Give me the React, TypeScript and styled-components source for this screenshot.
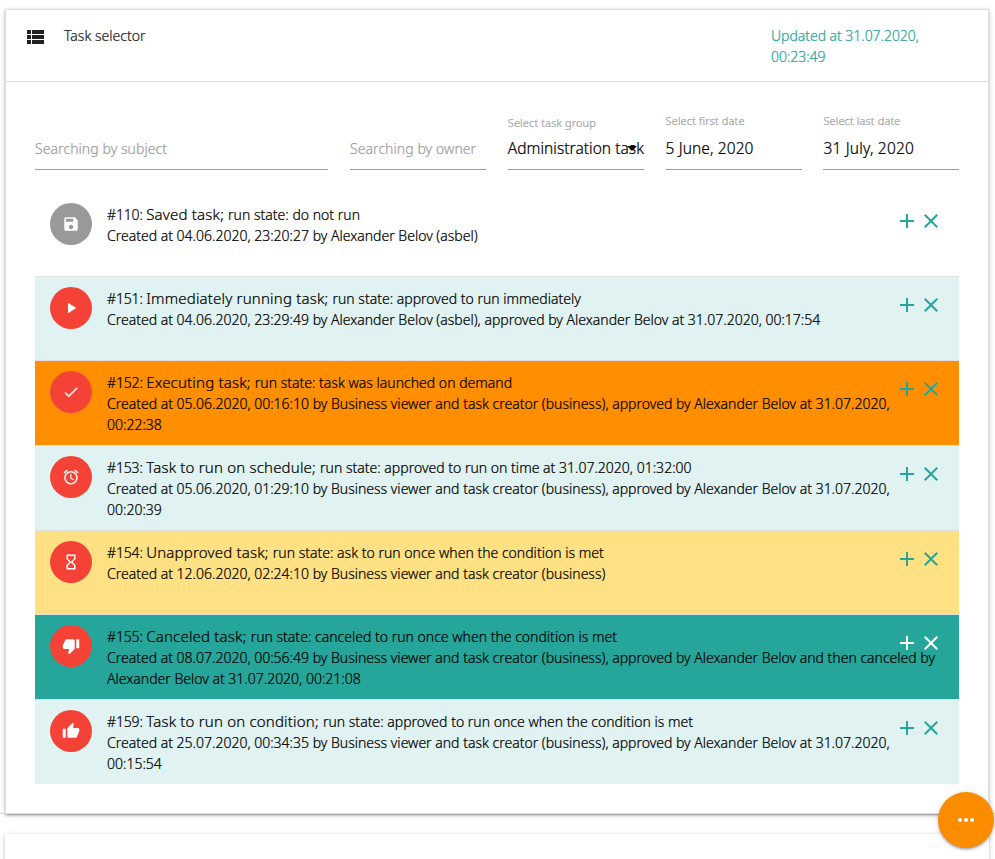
import React from "react";
import styled, { createGlobalStyle, css } from "styled-components";
import type { IconType } from "react-icons";
import {
  MdAdd,
  MdAlarm,
  MdCheck,
  MdClose,
  MdHourglassEmpty,
  MdMoreHoriz,
  MdPlayArrow,
  MdSave,
  MdThumbDown,
  MdThumbUp,
} from "react-icons/md";

type Tone = "plain" | "light" | "running" | "pending" | "canceled";

const rowColors: Record<Tone, string> = {
  plain: "#ffffff",
  light: "#e0f2f1",
  running: "#ff8f00",
  pending: "#ffe082",
  canceled: "#26a69a",
};

const GlobalStyle = createGlobalStyle`
  *, *::before, *::after { box-sizing: border-box; }
  body {
    margin: 0;
    background: #fff;
    color: #000;
    font: 300 14px/21px "Noto Sans", "Open Sans", sans-serif;
    -webkit-text-stroke: 0.22px currentColor;
    overflow: hidden;
  }
`;

const elevation = css`
  box-shadow: 0 2px 2px 0 rgba(0, 0, 0, 0.14), 0 3px 1px -2px rgba(0, 0, 0, 0.12),
    0 1px 5px 0 rgba(0, 0, 0, 0.2);
`;

const Page = styled.main`
  display: flex;
  flex-direction: column;
  gap: 20px;
  width: 995px;
  height: 859px;
  overflow: hidden;
`;

const Section = styled.section`
  height: 814px;
  padding: 9px 6px 0 5px;
  border-bottom: 1px solid #e0e0e0;
`;

const Card = styled.div`
  height: 805px;
  border: 1px solid #ddd;
  background: #fff;
  ${elevation}
`;

const NextCard = styled.div`
  flex: 0 0 60px;
  margin: 0 6px 0 5px;
  border-radius: 2px;
  background: #fff;
  ${elevation}
`;

const Header = styled.header`
  display: flex;
  align-items: flex-start;
  height: 72px;
  padding: 15px 0 0 16.5px;
  border-bottom: 1px solid #ddd;
`;

const HeaderIcon = styled.svg`
  width: 24px;
  height: 24px;
  margin-right: 17.5px;
  fill: #212121;
`;

const Title = styled.h1`
  width: 707px;
  margin: 0;
  color: #212121;
  font-size: 14px;
  font-weight: 300;
`;

const Updated = styled.p`
  width: 170px;
  margin: 0;
  color: #26a69a;
  letter-spacing: -0.04px;
`;

const Body = styled.div`
  padding: 20px 29px 0;
`;

const Filters = styled.div`
  display: grid;
  grid-template-columns: 293.2px repeat(4, 136px);
  column-gap: 21.8px;
  height: 68px;
  margin-bottom: 23px;
`;

const Field = styled.label<{ $drop?: boolean }>`
  position: relative;
  display: flex;
  flex-direction: column;
  justify-content: flex-end;
  gap: ${(p) => (p.$drop ? "6px" : "8px")};
  padding-bottom: 10px;
  border-bottom: 1px solid #9e9e9e;
`;

const FieldLabel = styled.span`
  color: #9e9e9e;
  font-size: 11px;
  line-height: 16px;
  letter-spacing: 0.13px;
  white-space: nowrap;
`;

const FieldValue = styled.span<{ $spacing?: number }>`
  font-size: 15.5px;
  line-height: 22px;
  letter-spacing: ${(p) => p.$spacing ?? 0}px;
  white-space: nowrap;
`;

const Placeholder = styled.span`
  color: #9e9e9e;
  line-height: 20px;
  letter-spacing: 0.07px;
  white-space: nowrap;
`;

const Caret = styled.svg`
  position: absolute;
  right: 7px;
  bottom: 18px;
  width: 10px;
  height: 5px;
`;

const List = styled.ul`
  margin: 0;
  padding: 0;
  list-style: none;
`;

const Row = styled.li<{ $tone: Tone }>`
  position: relative;
  display: flex;
  gap: 15px;
  min-height: 84px;
  padding: 10px 20px 10px 15px;
  background: ${(p) => rowColors[p.$tone]};
  border-bottom: 1px solid #e0e0e0;

  &:last-child {
    border-bottom: 0;
  }
`;

const Avatar = styled.span<{ $muted?: boolean }>`
  display: flex;
  flex: 0 0 42px;
  align-items: center;
  justify-content: center;
  height: 42px;
  border-radius: 50%;
  background: ${(p) => (p.$muted ? "#999" : "#f44336")};
  color: #fff;
  font-size: 18px;
`;

const Info = styled.div`
  padding-top: 1px;
  white-space: nowrap;
`;

const Line = styled.p`
  height: 21px;
  margin: 0;
`;

const TaskNumber = styled.span`
  letter-spacing: -0.15px;
`;

const TaskName = styled.span`
  font-size: 15px;
  letter-spacing: 0.19px;
`;

const RunState = styled.span`
  letter-spacing: 0.01px;
`;

const Actions = styled.div<{ $inverse: boolean }>`
  position: absolute;
  top: 16px;
  right: 16px;
  display: flex;
  color: ${(p) => (p.$inverse ? "#fff" : "#26a69a")};
  font-size: 24px;
`;

const Fab = styled.button`
  position: absolute;
  top: 792px;
  left: 938px;
  display: flex;
  align-items: center;
  justify-content: center;
  width: 56px;
  height: 56px;
  padding: 0;
  border: 0;
  border-radius: 50%;
  background: #fb8c00;
  color: #fff;
  font-size: 24px;
  ${elevation}
`;

interface Task {
  id: number;
  name: string;
  state: string;
  details: string[];
  tone: Tone;
  icon: IconType;
}

const tasks: Task[] = [
  {
    id: 110,
    name: "Saved task;",
    state: "do not run",
    details: ["Created at 04.06.2020, 23:20:27 by Alexander Belov (asbel)"],
    tone: "plain",
    icon: MdSave,
  },
  {
    id: 151,
    name: "Immediately running task;",
    state: "approved to run immediately",
    details: [
      "Created at 04.06.2020, 23:29:49 by Alexander Belov (asbel), approved by Alexander Belov at 31.07.2020, 00:17:54",
    ],
    tone: "light",
    icon: MdPlayArrow,
  },
  {
    id: 152,
    name: "Executing task;",
    state: "task was launched on demand",
    details: [
      "Created at 05.06.2020, 00:16:10 by Business viewer and task creator (business), approved by Alexander Belov at 31.07.2020,",
      "00:22:38",
    ],
    tone: "running",
    icon: MdCheck,
  },
  {
    id: 153,
    name: "Task to run on schedule;",
    state: "approved to run on time at 31.07.2020, 01:32:00",
    details: [
      "Created at 05.06.2020, 01:29:10 by Business viewer and task creator (business), approved by Alexander Belov at 31.07.2020,",
      "00:20:39",
    ],
    tone: "light",
    icon: MdAlarm,
  },
  {
    id: 154,
    name: "Unapproved task;",
    state: "ask to run once when the condition is met",
    details: ["Created at 12.06.2020, 02:24:10 by Business viewer and task creator (business)"],
    tone: "pending",
    icon: MdHourglassEmpty,
  },
  {
    id: 155,
    name: "Canceled task;",
    state: "canceled to run once when the condition is met",
    details: [
      "Created at 08.07.2020, 00:56:49 by Business viewer and task creator (business), approved by Alexander Belov and then canceled by",
      "Alexander Belov at 31.07.2020, 00:21:08",
    ],
    tone: "canceled",
    icon: MdThumbDown,
  },
  {
    id: 159,
    name: "Task to run on condition;",
    state: "approved to run once when the condition is met",
    details: [
      "Created at 25.07.2020, 00:34:35 by Business viewer and task creator (business), approved by Alexander Belov at 31.07.2020,",
      "00:15:54",
    ],
    tone: "light",
    icon: MdThumbUp,
  },
];

function TaskRow({ task }: { task: Task }) {
  const Icon = task.icon;
  return (
    <Row $tone={task.tone}>
      <Avatar $muted={task.tone === "plain"}>
        <Icon />
      </Avatar>
      <Info>
        <Line>
          <TaskNumber>#{task.id}: </TaskNumber>
          <TaskName>{task.name} </TaskName>
          <RunState>run state: {task.state}</RunState>
        </Line>
        {task.details.map((line) => (
          <Line key={line}>{line}</Line>
        ))}
      </Info>
      <Actions $inverse={task.tone === "canceled"}>
        <MdAdd />
        <MdClose />
      </Actions>
    </Row>
  );
}

export default function App() {
  return (
    <>
      <GlobalStyle />
      <Page>
        <Section>
          <Card>
            <Header>
              <HeaderIcon viewBox="0 0 24 24">
                <path d="M4 14h4v-4H4v4zm0 5h4v-4H4v4zM4 9h4V5H4v4zm5 5h12v-4H9v4zm0 5h12v-4H9v4zM9 5v4h12V5H9z" />
              </HeaderIcon>
              <Title>Task selector</Title>
              <Updated>Updated at 31.07.2020, 00:23:49</Updated>
            </Header>
            <Body>
              <Filters>
                <Field>
                  <Placeholder>Searching by subject</Placeholder>
                </Field>
                <Field>
                  <Placeholder>Searching by owner</Placeholder>
                </Field>
                <Field $drop>
                  <FieldLabel>Select task group</FieldLabel>
                  <FieldValue $spacing={0.03}>Administration task</FieldValue>
                  <Caret viewBox="0 0 10 5">
                    <path d="M0 0h10L5 5z" />
                  </Caret>
                </Field>
                <Field>
                  <FieldLabel>Select first date</FieldLabel>
                  <FieldValue $spacing={0.1}>5 June, 2020</FieldValue>
                </Field>
                <Field>
                  <FieldLabel>Select last date</FieldLabel>
                  <FieldValue $spacing={0.2}>31 July, 2020</FieldValue>
                </Field>
              </Filters>
              <List>
                {tasks.map((task) => (
                  <TaskRow key={task.id} task={task} />
                ))}
              </List>
            </Body>
          </Card>
        </Section>
        <NextCard />
      </Page>
      <Fab aria-label="More actions">
        <MdMoreHoriz />
      </Fab>
    </>
  );
}
